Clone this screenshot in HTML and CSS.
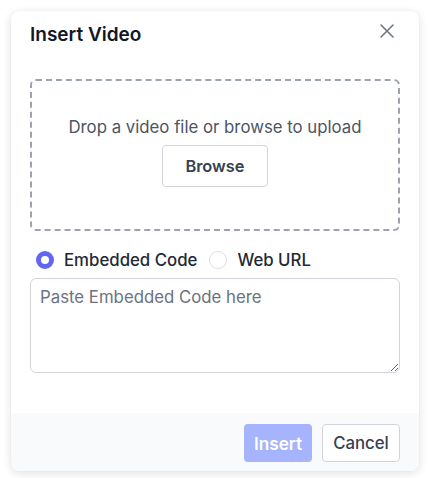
FILE: index.html
```html
<!DOCTYPE html>
<html lang="en">
<head>
    <meta charset="UTF-8">
    <meta name="viewport" content="width=device-width, initial-scale=1.0">
    <title>Insert Video</title>
    <link rel="stylesheet" href="styles.css">
</head>
<body>
    <div class="dialog">
        <div class="dialog-header">
            <h2 class="dialog-title">Insert Video</h2>
            <button class="close-btn" aria-label="Close">
                <svg width="14" height="14" viewBox="0 0 14 14" fill="none" stroke="#6b7280" stroke-width="1.5" stroke-linecap="round">
                    <path d="M1 1 L13 13 M13 1 L1 13"/>
                </svg>
            </button>
        </div>
        <div class="dialog-body">
            <div class="dropzone">
                <p class="drop-text">Drop a video file or browse to upload</p>
                <button class="btn btn-browse">Browse</button>
            </div>
            <div class="radio-row">
                <label class="radio-item">
                    <input type="radio" name="src" class="radio" checked>
                    <span>Embedded Code</span>
                </label>
                <label class="radio-item">
                    <input type="radio" name="src" class="radio">
                    <span>Web URL</span>
                </label>
            </div>
            <textarea class="code-input" placeholder="Paste Embedded Code here"></textarea>
        </div>
        <div class="dialog-footer">
            <button class="btn btn-insert" disabled>Insert</button>
            <button class="btn btn-cancel">Cancel</button>
        </div>
    </div>
</body>
</html>
```

FILE: styles.css
```css
body {
    margin: 0;
    padding: 11px;
    background: #ffffff;
    font-family: Inter, "Noto Sans", sans-serif;
    color: #1f2937;
}

.dialog {
    width: 408px;
    background: #ffffff;
    border-radius: 8px;
    box-shadow: 0 2px 10px rgba(0, 0, 0, 0.12), 0 0 2px rgba(0, 0, 0, 0.05);
    overflow: hidden;
}

.dialog-header {
    display: flex;
    align-items: center;
    justify-content: space-between;
    padding: 10px 19px 0 19px;
}

.dialog-title {
    margin: 0;
    font-size: 19px;
    line-height: 28px;
    font-weight: 600;
    color: #111827;
}

.close-btn {
    border: none;
    background: none;
    padding: 0;
    margin-right: 6px;
    margin-top: -8px;
    width: 14px;
    height: 14px;
    display: flex;
    cursor: pointer;
}

.dialog-body {
    padding: 30px 19px 40px 19px;
}

.dropzone {
    border: 2px dashed #9ca3af;
    border-radius: 6px;
    height: 148px;
    display: flex;
    flex-direction: column;
    align-items: center;
}

.drop-text {
    margin: 34px 0 6px 0;
    font-size: 16.8px;
    line-height: 24px;
    color: #4b5563;
}

.btn {
    font-family: inherit;
    border-radius: 4px;
    cursor: pointer;
}

.btn-browse {
    width: 106px;
    height: 42px;
    background: #ffffff;
    border: 1px solid #d1d5db;
    font-size: 16.4px;
    font-weight: 600;
    color: #374151;
}

.radio-row {
    display: flex;
    align-items: center;
    margin-top: 18px;
    height: 22px;
}

.radio-item {
    display: flex;
    align-items: center;
    font-size: 16.8px;
    font-weight: 450;
    color: #1f2937;
    margin-right: 6px;
}

.radio {
    appearance: none;
    width: 18px;
    height: 18px;
    margin: 0 10px 0 6px;
    border: 1px solid #dcdfe4;
    border-radius: 50%;
    background: #ffffff;
}

.radio:checked {
    border: 5px solid #6366f1;
}

.code-input {
    display: block;
    width: 100%;
    height: 95px;
    margin-top: 7px;
    box-sizing: border-box;
    border: 1px solid #d1d5db;
    border-radius: 6px;
    padding: 6px 9px;
    font-family: inherit;
    font-size: 16.8px;
    line-height: 24px;
    color: #1f2937;
    resize: vertical;
}

.code-input::placeholder {
    color: #6b7280;
}

.dialog-footer {
    display: flex;
    justify-content: flex-end;
    gap: 10px;
    background: #f9fafb;
    padding: 11px 19px 9px 19px;
}

.btn-insert {
    width: 68px;
    height: 38px;
    border: none;
    background: #a5b4fc;
    color: #ffffff;
    font-weight: 600;
    font-size: 17.2px;
}

.btn-cancel {
    width: 78px;
    height: 38px;
    border: 1px solid #d1d5db;
    background: #ffffff;
    color: #374151;
    font-weight: 500;
    font-size: 16.8px;
}
```
